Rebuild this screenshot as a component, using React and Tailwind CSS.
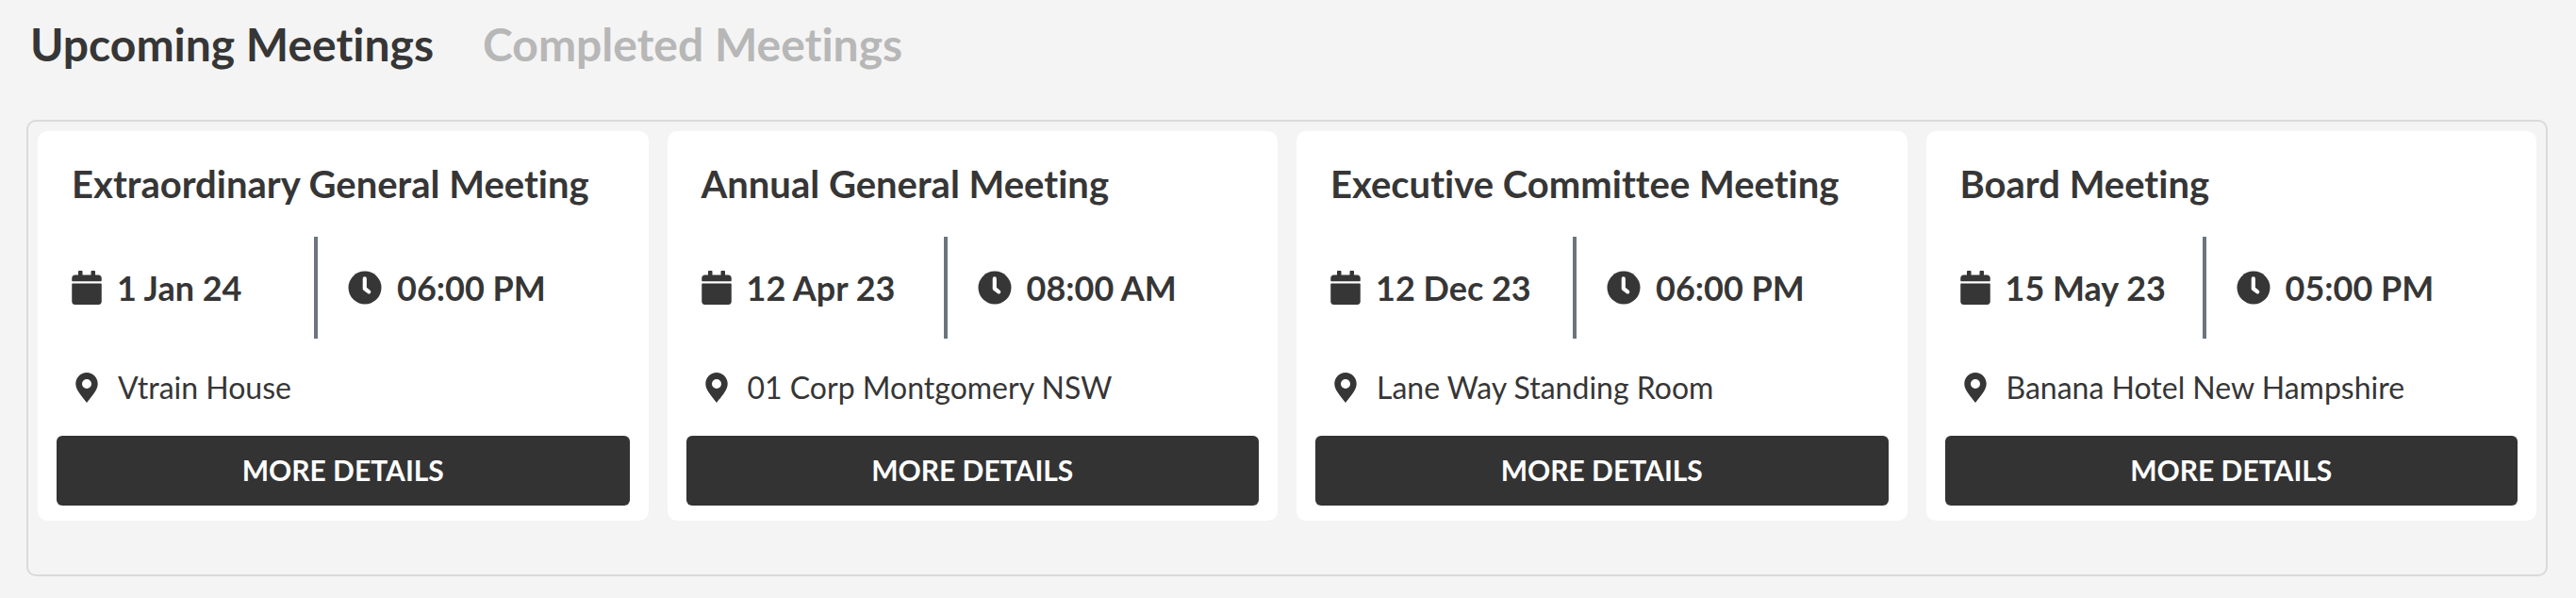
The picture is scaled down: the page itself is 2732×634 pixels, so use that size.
import { FaCalendar } from "react-icons/fa";

const meetings = [
  { title: "Extraordinary General Meeting", date: "1 Jan 24", time: "06:00 PM", place: "Vtrain House" },
  { title: "Annual General Meeting", date: "12 Apr 23", time: "08:00 AM", place: "01 Corp Montgomery NSW" },
  { title: "Executive Committee Meeting", date: "12 Dec 23", time: "06:00 PM", place: "Lane Way Standing Room" },
  { title: "Board Meeting", date: "15 May 23", time: "05:00 PM", place: "Banana Hotel New Hampshire" },
];

function ClockIcon({ className }) {
  return (
    <svg viewBox="0 0 36 36" className={className} aria-hidden="true">
      <circle cx="18" cy="18" r="17.5" fill="currentColor" />
      <path d="M17.8 8.4V19l4.4 3.4" fill="none" stroke="#fff" strokeWidth="4.2" strokeLinecap="round" strokeLinejoin="round" />
    </svg>
  );
}

function PinIcon({ className }) {
  return (
    <svg viewBox="0 0 24 32" className={className} aria-hidden="true">
      <path
        fill="currentColor"
        fillRule="evenodd"
        d="M12 0C5.5 0 .3 5.3.3 11.8c0 3 1.1 5.5 2.7 8.1C5.500 24 9 28 12 32c3-4 6.500-8 9-12.100 1.600-2.600 2.700-5.100 2.700-8.100C23.700 5.300 18.500 0 12 0Zm0 17a5 5 0 1 1 0-10 5 5 0 0 1 0 10Z"
      />
    </svg>
  );
}

function MeetingCard({ title, date, time, place }) {
  return (
    <article className="flex flex-col rounded-[10px] bg-white px-5 pt-[26px] pb-4">
      <h2 className="px-4 text-[40px] leading-[60px] font-bold">{title}</h2>
      <div className="mt-[26px] flex items-center px-4 text-[36px] leading-[54px] font-bold">
        <div className="flex w-[257px] items-center gap-4">
          <FaCalendar className="h-9 w-8" />
          <span>{date}</span>
        </div>
        <div className="flex h-[108px] items-center gap-4 border-l-4 border-[#6c757d] pl-8">
          <ClockIcon className="size-9" />
          <span>{time}</span>
        </div>
      </div>
      <div className="mt-7 flex items-center gap-[21px] px-5 text-[32px] leading-[48px]">
        <PinIcon className="h-8 w-6" />
        <span>{place}</span>
      </div>
      <button type="button" className="mt-[27px] h-[74px] rounded-md bg-[#333] pb-0.5 text-[30px] leading-[44px] font-bold text-white">
        MORE DETAILS
      </button>
    </article>
  );
}

export default function App() {
  return (
    <main className="min-h-screen bg-[#f4f4f4] pr-[30px] pb-6 pl-7 font-['Lato',sans-serif] text-[#363636] [font-variant-ligatures:none]">
      <nav className="flex gap-[52px] px-1 pt-[11px] pb-11 text-[48px] leading-[72px] font-bold">
        <button type="button">Upcoming Meetings</button>
        <button type="button" className="text-[#b7b7b7]">Completed Meetings</button>
      </nav>
      <section className="grid grid-cols-4 gap-5 rounded-[10px] border-2 border-[#dadada] px-2.5 pt-2.5 pb-[57px]">
        {meetings.map((m) => (
          <MeetingCard key={m.title} {...m} />
        ))}
      </section>
    </main>
  );
}
